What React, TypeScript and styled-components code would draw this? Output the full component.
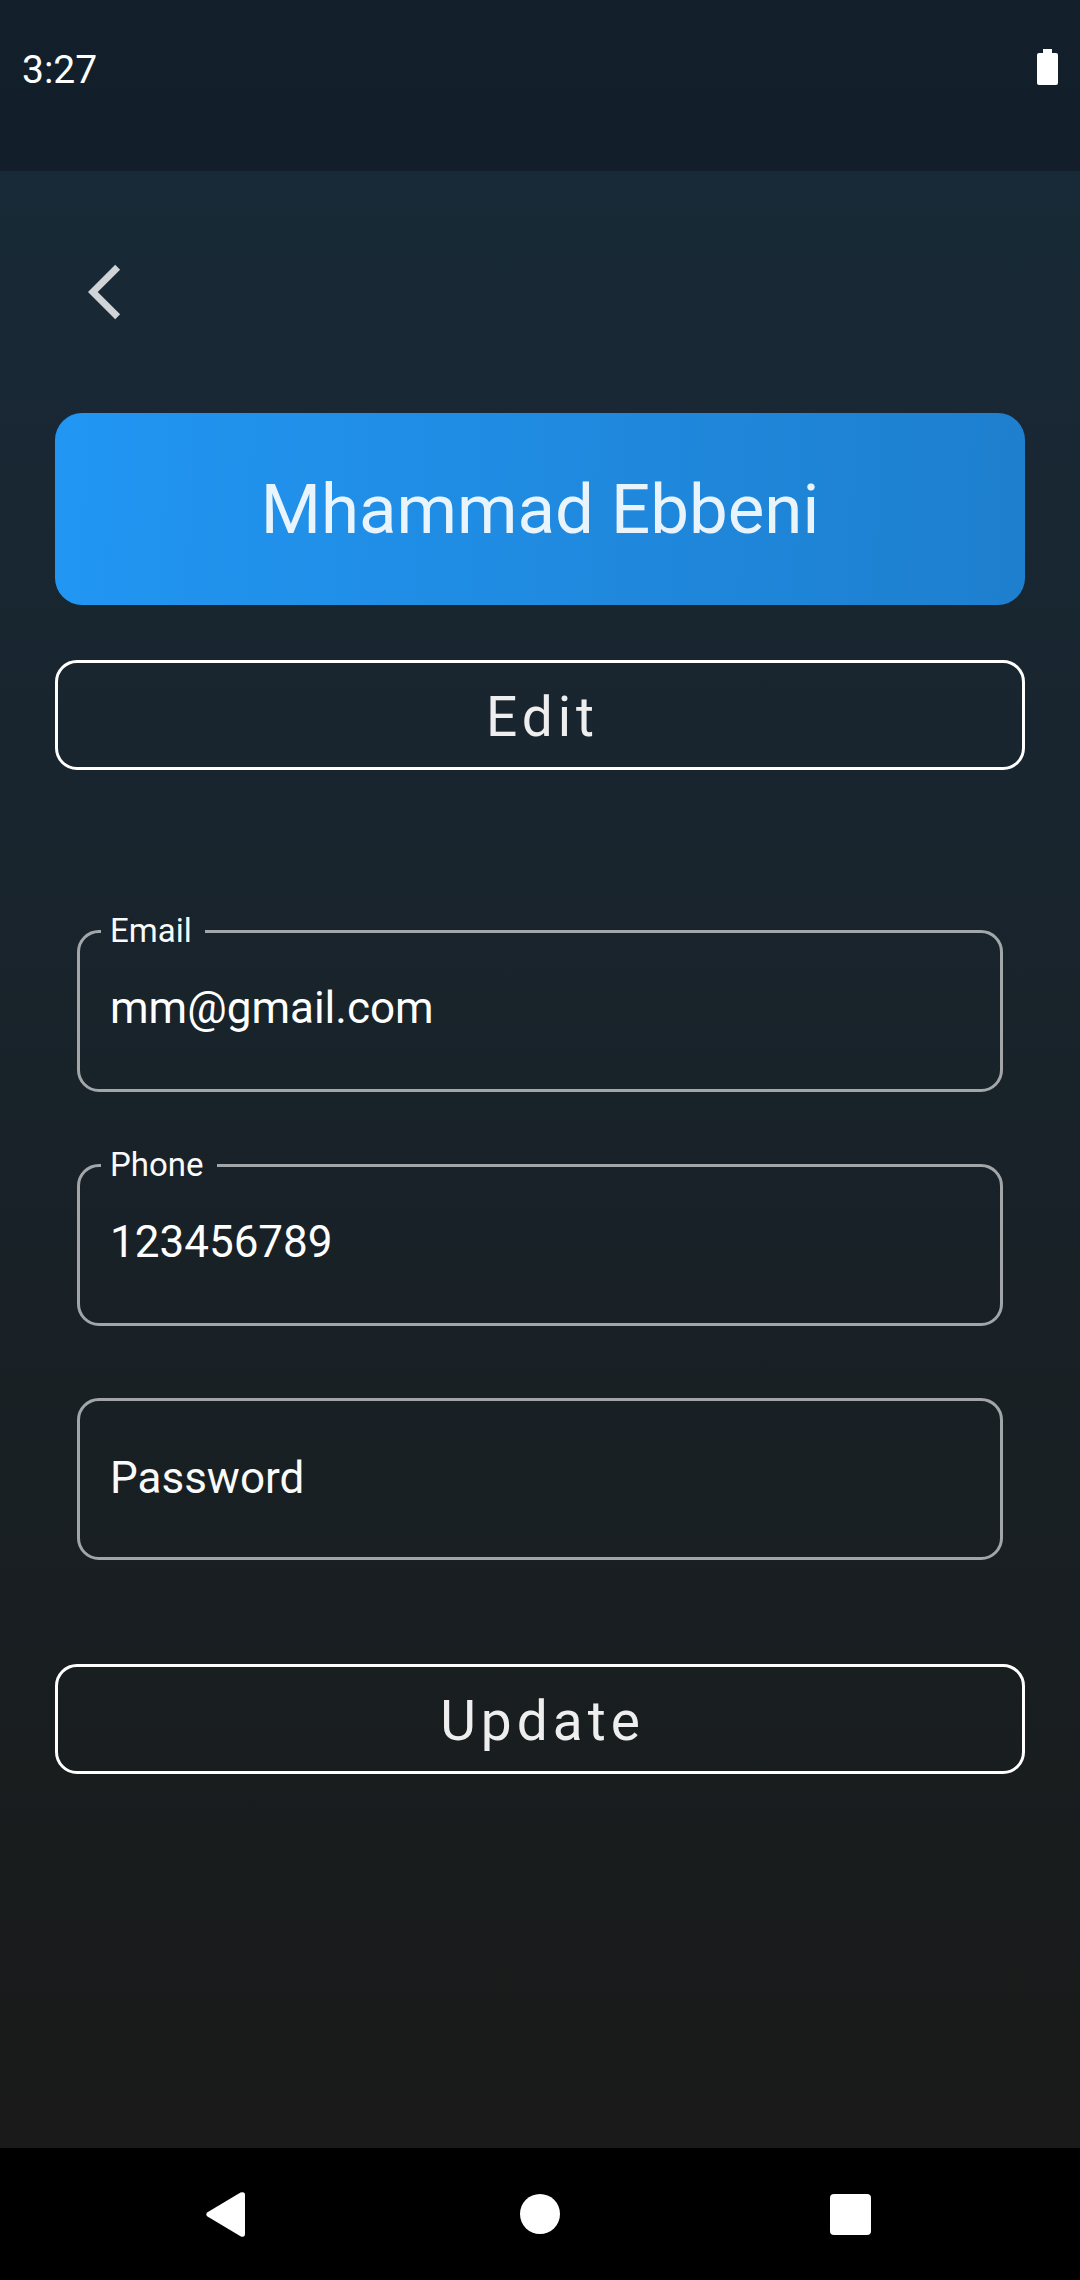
import React, { useState } from "react";
import styled, { createGlobalStyle } from "styled-components";

const GlobalStyle = createGlobalStyle`
  *, *::before, *::after { box-sizing: border-box; }
  body { margin: 0; background: #000; }
  body, button, input { font-family: Roboto, "Noto Sans", sans-serif; }
`;

const Screen = styled.div`
  display: flex;
  flex-direction: column;
  min-height: 100vh;
`;

const Backdrop = styled.div`
  flex: 1;
  display: flex;
  flex-direction: column;
  background: linear-gradient(180deg, #182b3a 0%, #191a19 100%);
`;

const StatusBar = styled.header`
  display: flex;
  justify-content: space-between;
  align-items: flex-start;
  padding: 47px 22px 78px;
  background: rgba(0, 0, 0, 0.25);
  color: #fff;
  font-size: 39px;
  line-height: 46px;
`;

const BatteryIcon = styled.svg`
  width: 21px;
  height: 40px;
  fill: #fff;
`;

const Main = styled.main`
  display: flex;
  flex-direction: column;
  padding: 88px 55px;
`;

const BackButton = styled.button`
  align-self: flex-start;
  display: flex;
  margin: 0 33px;
  padding: 0;
  border: 0;
  background: none;
  color: rgba(255, 255, 255, 0.8);
  cursor: pointer;

  svg {
    width: 66px;
    height: 66px;
    fill: currentColor;
  }
`;

const NameCard = styled.h1`
  margin: 88px 0 55px;
  padding: 57px 24px 55px;
  border-radius: 27px;
  background: linear-gradient(93deg, #2196f3 0%, #1e7fce 100%);
  color: rgba(255, 255, 255, 0.9);
  font-size: 69px;
  font-weight: 400;
  line-height: 80px;
  text-align: center;
`;

const OutlineButton = styled.button`
  width: 100%;
  height: 110px;
  padding: 4px 0 0 5px;
  border: 3px solid #fff;
  border-radius: 22px;
  background: none;
  color: #eee;
  font-size: 55px;
  letter-spacing: 5px;
  cursor: pointer;
`;

const Form = styled.form`
  display: flex;
  flex-direction: column;
  gap: 104px;
  margin-top: 142px;
`;

const Fields = styled.div`
  display: flex;
  flex-direction: column;
  gap: 54px;
  padding: 0 22px;
`;

const Outline = styled.fieldset<{ $labelled: boolean }>`
  min-width: 0;
  margin: ${(p) => (p.$labelled ? "0" : "18px 0 0")};
  padding: 0 21px ${(p) => (p.$labelled ? "24px" : "2px")};
  border: 3px solid rgba(255, 255, 255, 0.6);
  border-radius: 22px;
`;

const Legend = styled.legend`
  padding: 0 13px 2px 9px;
  color: #fafafa;
  font-size: 33px;
  line-height: 37px;
`;

const TextInput = styled.input<{ $tall: boolean }>`
  display: block;
  width: 100%;
  height: ${(p) => (p.$tall ? "154px" : "114px")};
  padding: 0 9px;
  border: 0;
  outline: 0;
  background: none;
  color: #fff;
  font-size: 44px;

  &::placeholder {
    color: #fafafa;
    opacity: 1;
  }
`;

const NavBar = styled.nav`
  display: grid;
  grid-template-columns: repeat(3, 1fr);
  height: 132px;
  padding: 0 75px;
  background: #000;
`;

const NavButton = styled.button`
  display: flex;
  align-items: center;
  justify-content: center;
  padding: 0;
  border: 0;
  background: none;
  cursor: pointer;

  svg {
    width: 48px;
    height: 48px;
    fill: #fff;
  }
`;

type FieldProps = {
  id: string;
  label: string;
  type: string;
  value: string;
  onChange: (value: string) => void;
};

/* The label floats into the border once there is a value. */
function Field({ id, label, type, value, onChange }: FieldProps) {
  const filled = value !== "";
  return (
    <Outline $labelled={filled}>
      {filled && (
        <Legend>
          <label htmlFor={id}>{label}</label>
        </Legend>
      )}
      <TextInput
        id={id}
        type={type}
        value={value}
        placeholder={label}
        aria-label={label}
        $tall={!filled}
        onChange={(e) => onChange(e.target.value)}
      />
    </Outline>
  );
}

export default function App() {
  const [email, setEmail] = useState("mm@gmail.com");
  const [phone, setPhone] = useState("123456789");
  const [password, setPassword] = useState("");

  return (
    <Screen>
      <GlobalStyle />
      <Backdrop>
        <StatusBar>
          <time>3:27</time>
          <BatteryIcon viewBox="0 0 21 40" aria-hidden="true">
            <path d="M6 2h9v4h4q2 0 2 2v28q0 2-2 2H2q-2 0-2-2V8q0-2 2-2h4z" />
          </BatteryIcon>
        </StatusBar>
        <Main>
          <BackButton type="button" aria-label="Back">
            <svg viewBox="0 0 24 24" aria-hidden="true">
              <path d="M11.67 3.87L9.9 2.1 0 12l9.9 9.9 1.77-1.77L3.54 12z" />
            </svg>
          </BackButton>
          <NameCard>Mhammad Ebbeni</NameCard>
          <OutlineButton type="button">Edit</OutlineButton>
          <Form onSubmit={(e) => e.preventDefault()}>
            <Fields>
              <Field id="email" label="Email" type="email" value={email} onChange={setEmail} />
              <Field id="phone" label="Phone" type="tel" value={phone} onChange={setPhone} />
              <Field
                id="password"
                label="Password"
                type="password"
                value={password}
                onChange={setPassword}
              />
            </Fields>
            <OutlineButton type="submit">Update</OutlineButton>
          </Form>
        </Main>
      </Backdrop>
      <NavBar>
        <NavButton type="button" aria-label="System back">
          <svg viewBox="0 0 48 48" aria-hidden="true">
            <path d="M1.5 22.2Q-1 24.5 1.5 26.6L34.5 46.2Q39 48 39 43.5V5Q39 1 34.5 2.6Z" />
          </svg>
        </NavButton>
        <NavButton type="button" aria-label="Home">
          <svg viewBox="0 0 48 48" aria-hidden="true">
            <circle cx="24" cy="24" r="20" />
          </svg>
        </NavButton>
        <NavButton type="button" aria-label="Recent apps">
          <svg viewBox="0 0 48 48" aria-hidden="true">
            <rect x="4" y="4" width="41" height="41" rx="4" />
          </svg>
        </NavButton>
      </NavBar>
    </Screen>
  );
}
